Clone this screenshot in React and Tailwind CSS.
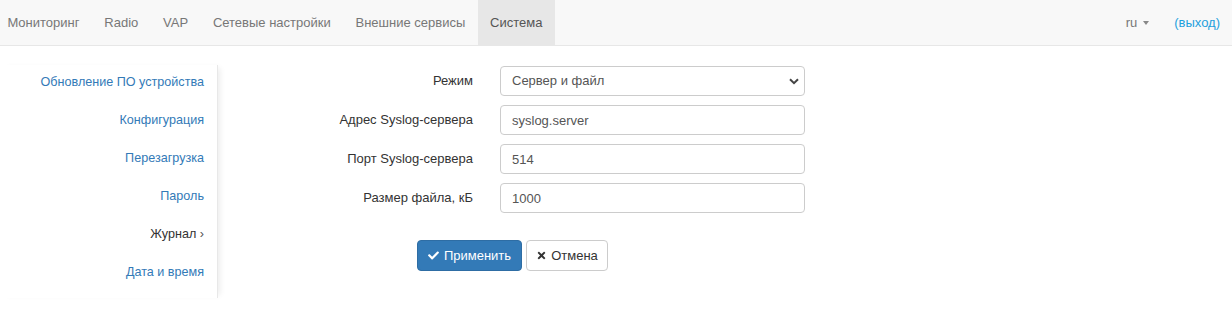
import { FaCheck, FaTimes } from 'react-icons/fa'

const tabs = ['Мониторинг', 'Radio', 'VAP', 'Сетевые настройки', 'Внешние сервисы', 'Система']
const menu = ['Обновление ПО устройства', 'Конфигурация', 'Перезагрузка', 'Пароль', 'Журнал', 'Дата и время']

function Field({ label, children }) {
  return (
    <div className="flex items-center mb-[9px]">
      <label className="w-[282px] pr-[27px] text-right text-[#333]">{label}</label>
      {children}
    </div>
  )
}

export default function App() {
  return (
    <div className="min-h-[326px] bg-white text-[13px] font-['Liberation_Sans',Arial,sans-serif]">
      <nav className="h-[46px] bg-[#f8f8f8] border-b border-[#e7e7e7] flex items-stretch">
        <ul className="flex ml-[-5px]">
          {tabs.map((t) => (
            <li key={t}>
              <a
                className={
                  'h-[45px] px-[12.4px] flex items-center ' +
                  (t === 'Система' ? 'bg-[#e7e7e7] text-[#555]' : 'text-[#777]')
                }
              >
                {t}
              </a>
            </li>
          ))}
        </ul>
        <div className="ml-auto flex items-center pr-[12px]">
          <a className="flex items-center text-[#777]">
            ru
            <span className="ml-[6px] inline-block w-0 h-0 border-l-[3px] border-r-[3px] border-t-[4px] border-l-transparent border-r-transparent border-t-[#888]" />
          </a>
          <a className="ml-[25px] text-[#1ea0dd]">(выход)</a>
        </div>
      </nav>

      <div className="flex">
        <ul className="w-[218px] mt-[19px] pb-[5px] border-r border-[#e8e8e8] shadow-[5px_0_6px_-3px_rgba(0,0,0,0.08)] text-[12.6px]">
          {menu.map((m) => (
            <li key={m} className="h-[38px] pt-[7px] pr-[13px] text-right leading-5">
              {m === 'Журнал' ? (
                <span className="text-[#333]">
                  Журнал <span className="text-[#555]">›</span>
                </span>
              ) : (
                <a className="text-[#337ab7]">{m}</a>
              )}
            </li>
          ))}
        </ul>

        <div className="pt-[20px]">
          <Field label="Режим">
            <div className="relative w-[305px]">
              <select
                defaultValue="both"
                className="appearance-none w-full h-[30px] pl-[11px] border border-[#ccc] rounded-[4px] bg-white text-[#555] outline-none"
              >
                <option value="both">Сервер и файл</option>
              </select>
              <svg
                className="absolute right-[6px] top-[12px] pointer-events-none"
                width="10"
                height="7"
                viewBox="0 0 10 7"
              >
                <path d="M1 1.2 L5 5.2 L9 1.2" fill="none" stroke="#444" strokeWidth="2" />
              </svg>
            </div>
          </Field>
          <Field label="Адрес Syslog-сервера">
            <input
              defaultValue="syslog.server"
              className="w-[305px] h-[30px] pl-[11px] border border-[#ccc] rounded-[4px] text-[#555] outline-none"
            />
          </Field>
          <Field label="Порт Syslog-сервера">
            <input
              defaultValue="514"
              className="w-[305px] h-[30px] pl-[11px] border border-[#ccc] rounded-[4px] text-[#555] outline-none"
            />
          </Field>
          <Field label="Размер файла, кБ">
            <input
              defaultValue="1000"
              className="w-[305px] h-[30px] pl-[11px] border border-[#ccc] rounded-[4px] text-[#555] outline-none"
            />
          </Field>

          <div className="flex gap-[4px] ml-[199px] mt-[27px]">
            <button className="h-[31px] w-[105px] flex items-center justify-center gap-[5px] bg-[#337ab7] border border-[#2e6da4] rounded-[4px] text-white">
              <FaCheck className="w-[11px] h-[11px]" />
              Применить
            </button>
            <button className="h-[31px] w-[82px] flex items-center justify-center gap-[4px] bg-white border border-[#ccc] rounded-[4px] text-[#333]">
              <FaTimes className="w-[11px] h-[11px]" />
              Отмена
            </button>
          </div>
        </div>
      </div>
    </div>
  )
}
